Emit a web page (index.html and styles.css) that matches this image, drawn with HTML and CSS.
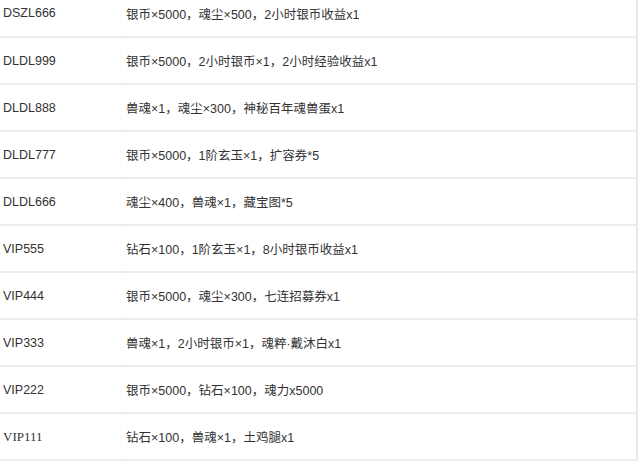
FILE: index.html
```html
<!DOCTYPE html>
<html>
<head>
<meta charset="utf-8">
<link rel="stylesheet" href="styles.css">
</head>
<body>
<div class="wrap">
<table class="codes">
<tr><td class="code">DSZL666</td><td class="gift">银币×5000，魂尘×500，2小时银币收益x1</td></tr>
<tr><td class="code">DLDL999</td><td class="gift">银币×5000，2小时银币×1，2小时经验收益x1</td></tr>
<tr><td class="code">DLDL888</td><td class="gift">兽魂×1，魂尘×300，神秘百年魂兽蛋x1</td></tr>
<tr><td class="code">DLDL777</td><td class="gift">银币×5000，1阶玄玉×1，扩容券*5</td></tr>
<tr><td class="code">DLDL666</td><td class="gift">魂尘×400，兽魂×1，藏宝图*5</td></tr>
<tr><td class="code">VIP555</td><td class="gift">钻石×100，1阶玄玉×1，8小时银币收益x1</td></tr>
<tr><td class="code">VIP444</td><td class="gift">银币×5000，魂尘×300，七连招募券x1</td></tr>
<tr><td class="code">VIP333</td><td class="gift">兽魂×1，2小时银币×1，魂粹·戴沐白x1</td></tr>
<tr><td class="code">VIP222</td><td class="gift">银币×5000，钻石×100，魂力x5000</td></tr>
<tr><td class="code serif">VIP111</td><td class="gift">钻石×100，兽魂×1，土鸡腿x1</td></tr>
</table>
</div>
</body>
</html>
```
FILE: styles.css
```css
html, body {
  margin: 0;
  padding: 0;
  background: #fff;
  overflow: hidden;
}
.wrap {
  width: 640px;
  height: 464px;
  overflow: hidden;
}
.codes {
  margin-top: -10px;
  width: 638px;
  border-collapse: collapse;
  border-right: 2px solid #e8e8e8;
  font-family: "Liberation Sans", Arial, "Noto Sans CJK SC", sans-serif;
  font-size: 12.5px;
  color: #333;
}
.codes tr {
  height: 47px;
}
.codes td {
  padding: 0;
  border-bottom: 2px solid #ececec;
  vertical-align: middle;
  white-space: nowrap;
}
.code {
  width: 117px;
  padding-left: 3px !important;
  border-right: 1px solid #fbfbfb;
}
.gift {
  padding-left: 5px !important;
}
.serif {
  font-family: "Liberation Serif", "Times New Roman", serif;
  font-size: 13px;
}
```
